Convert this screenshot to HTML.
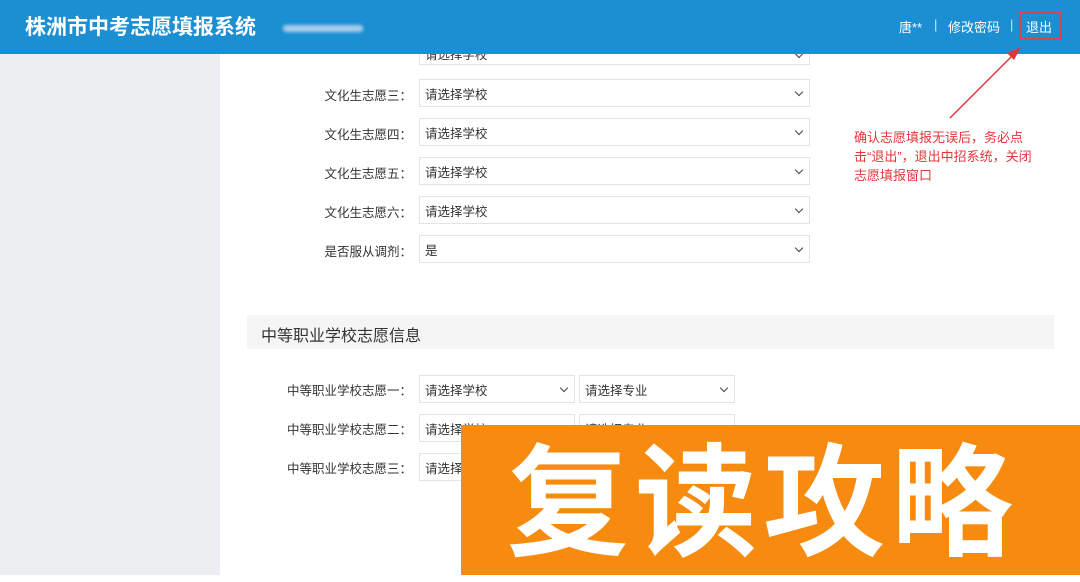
<!DOCTYPE html>
<html><head><meta charset="utf-8"><style>
*{margin:0;padding:0;box-sizing:border-box}
body{width:1080px;height:575px;overflow:hidden;position:relative;background:#fff;font-family:"Liberation Sans","Noto Sans CJK SC",sans-serif;color:#333}
.hd{position:absolute;left:0;top:0;width:1080px;height:54px;background:#1b8fd2}
.title{position:absolute;left:25px;top:11px;color:#fff;font-size:21px;font-weight:bold}
.blur{position:absolute;left:283px;top:25px;width:80px;height:7px;background:#a9cdea;border-radius:3px;filter:blur(1.5px)}
.nav{position:absolute;top:17px;color:#fff;font-size:13px}
.side{position:absolute;left:0;top:54px;width:220px;height:521px;background:#eceef1}
.lbl{position:absolute;font-size:12.5px;color:#333;text-align:right}
.sel{position:absolute;height:28px;border:1px solid #e3e3e3;background:#fff;font-size:12.5px;padding:4px 0 0 5px}
.sel:after{content:"";position:absolute;right:7px;top:9px;width:5px;height:5px;border-right:1.5px solid #444;border-bottom:1.5px solid #444;transform:rotate(45deg)}
.sec{position:absolute;left:247px;top:315px;width:807px;height:34px;background:#f5f5f6;font-size:16px;padding:7px 0 0 14px;color:#333}
.note{position:absolute;left:854px;top:128px;color:#e0383a;font-size:13px;line-height:19px}
.orange{position:absolute;left:461px;top:425px;width:619px;height:150px;background:#f78b10;color:#fff;font-size:122px;font-weight:bold;letter-spacing:6px;padding:0 0 0 46px;line-height:138px;font-family:"Noto Sans CJK SC",sans-serif;white-space:nowrap}
</style></head><body>
<div class="side"></div>
<div class="sel" style="left:419px;top:41px;width:391px;height:24px;padding-top:2px">请选择学校</div>
<div class="hd"></div>
<div class="title">株洲市中考志愿填报系统</div>
<div class="blur"></div>
<div class="nav" style="left:899px">唐**</div>
<div class="nav" style="left:934px;color:#cfe5f5">|</div>
<div class="nav" style="left:948px">修改密码</div>
<div class="nav" style="left:1010px;color:#cfe5f5">|</div>
<div class="nav" style="left:1026px">退出</div>
<div style="position:absolute;left:1019px;top:12px;width:43px;height:28px;border:2px solid #d9434a"></div>

<div class="lbl" style="left:300px;width:112px;top:85px">文化生志愿三：</div>
<div class="sel" style="left:419px;top:79px;width:391px">请选择学校</div>
<div class="lbl" style="left:300px;width:112px;top:124px">文化生志愿四：</div>
<div class="sel" style="left:419px;top:118px;width:391px">请选择学校</div>
<div class="lbl" style="left:300px;width:112px;top:163px">文化生志愿五：</div>
<div class="sel" style="left:419px;top:157px;width:391px">请选择学校</div>
<div class="lbl" style="left:300px;width:112px;top:202px">文化生志愿六：</div>
<div class="sel" style="left:419px;top:196px;width:391px">请选择学校</div>
<div class="lbl" style="left:300px;width:112px;top:241px">是否服从调剂：</div>
<div class="sel" style="left:419px;top:235px;width:391px">是</div>

<div class="sec">中等职业学校志愿信息</div>
<div class="lbl" style="left:250px;width:162px;top:380px">中等职业学校志愿一：</div>
<div class="sel" style="left:419px;top:375px;width:156px">请选择学校</div>
<div class="sel" style="left:579px;top:375px;width:156px">请选择专业</div>
<div class="lbl" style="left:250px;width:162px;top:419px">中等职业学校志愿二：</div>
<div class="sel" style="left:419px;top:414px;width:156px">请选择学校</div>
<div class="sel" style="left:579px;top:414px;width:156px">请选择专业</div>
<div class="lbl" style="left:250px;width:162px;top:458px">中等职业学校志愿三：</div>
<div class="sel" style="left:419px;top:453px;width:156px">请选择学校</div>

<svg style="position:absolute;left:0;top:0" width="1080" height="575"><line x1="950" y1="118" x2="1016" y2="52" stroke="#e0383a" stroke-width="1.5"/><polygon points="1021,47 1007,53 1014,60" fill="#e0383a"/></svg>
<div class="note">确认志愿填报无误后，务必点<br>击“退出”，退出中招系统，关闭<br>志愿填报窗口</div>
<div class="orange">复读攻略</div>
</body></html>
